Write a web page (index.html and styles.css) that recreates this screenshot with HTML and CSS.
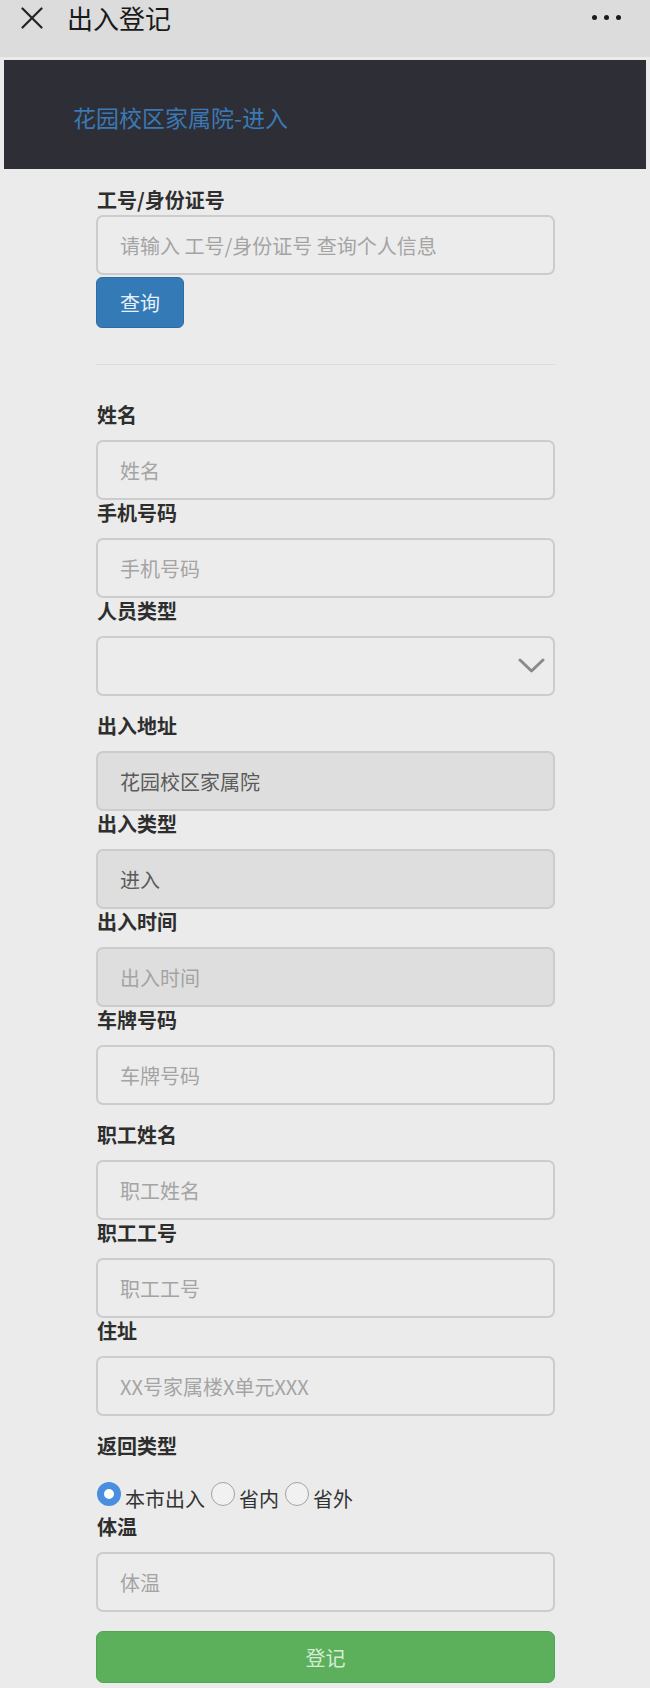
FILE: index.html
```html
<!DOCTYPE html>
<html lang="zh-CN">
<head>
<meta charset="utf-8">
<title>出入登记</title>
<link rel="stylesheet" href="styles.css">
</head>
<body>
<header class="topbar">
  <svg class="close-icon" width="22" height="22" viewBox="0 0 22 22"><path d="M1.5 1.5 L20.5 20.5 M20.5 1.5 L1.5 20.5" stroke="#222" stroke-width="2.2" fill="none" stroke-linecap="round"/></svg>
  <h1 class="topbar-title">出入登记</h1>
  <div class="more"><span class="dot"></span><span class="dot"></span><span class="dot"></span></div>
</header>
<nav class="banner"><a class="brand">花园校区家属院-进入</a></nav>
<form class="form">
  <label class="lbl lbl-first">工号/身份证号</label>
  <input class="ctl" type="text" placeholder="请输入 工号/身份证号 查询个人信息">
  <button type="button" class="btn-query">查询</button>
  <hr class="divider">

  <label class="lbl">姓名</label>
  <input class="ctl" type="text" placeholder="姓名">
  <label class="lbl">手机号码</label>
  <input class="ctl" type="text" placeholder="手机号码">
  <label class="lbl">人员类型</label>
  <div class="select-wrap">
    <select class="ctl sel"><option></option></select>
    <svg class="chev" width="27" height="16" viewBox="0 0 27 16"><path d="M2 2 L13.5 13 L25 2" stroke="#8a8a8a" stroke-width="3" fill="none" stroke-linecap="round" stroke-linejoin="round"/></svg>
  </div>

  <label class="lbl group">出入地址</label>
  <input class="ctl ro" type="text" value="花园校区家属院" readonly>
  <label class="lbl">出入类型</label>
  <input class="ctl ro" type="text" value="进入" readonly>
  <label class="lbl">出入时间</label>
  <input class="ctl ro" type="text" placeholder="出入时间" readonly>
  <label class="lbl">车牌号码</label>
  <input class="ctl" type="text" placeholder="车牌号码">

  <label class="lbl group">职工姓名</label>
  <input class="ctl" type="text" placeholder="职工姓名">
  <label class="lbl">职工工号</label>
  <input class="ctl" type="text" placeholder="职工工号">
  <label class="lbl">住址</label>
  <input class="ctl" type="text" placeholder="XX号家属楼X单元XXX">

  <label class="lbl group">返回类型</label>
  <div class="radios">
    <input class="radio" type="radio" name="rt" checked><span class="rtext">本市出入</span>
    <input class="radio" type="radio" name="rt"><span class="rtext">省内</span>
    <input class="radio" type="radio" name="rt"><span class="rtext">省外</span>
  </div>
  <label class="lbl lbl-temp">体温</label>
  <input class="ctl" type="text" placeholder="体温">
  <button type="button" class="btn-submit">登记</button>
</form>
</body>
</html>
```

FILE: styles.css
```css
* { box-sizing: border-box; }
html, body { margin: 0; padding: 0; }
body {
  background: #ebebeb;
  font-family: "Noto Sans CJK SC", "Noto Sans", sans-serif;
  color: #333;
  width: 650px;
  min-height: 1688px;
}
.topbar {
  height: 57px;
  background: #dcdcdc;
  display: flex;
  align-items: flex-start;
  padding: 0 29px 0 21px;
}
.close-icon { margin-top: 7px; flex: none; }
.topbar-title {
  margin: 0 0 0 24px;
  font-size: 26px;
  line-height: 36px;
  font-weight: 400;
  color: #1a1a1a;
  flex: 1;
}
.more {
  display: flex;
  gap: 7px;
  margin-top: 15px;
}
.dot {
  width: 5px; height: 5px;
  border-radius: 50%;
  background: #1a1a1a;
}
.banner {
  margin: 3px 4px 0 4px;
  height: 109px;
  background: #2e2e36;
  display: flex;
  align-items: center;
  padding-left: 69px;
}
.brand {
  color: #3b79b4;
  font-size: 23px;
  line-height: 30px;
  margin-top: 5px;
}
.form {
  margin: 0 95px 0 96px;
  padding-top: 18px;
  display: flex;
  flex-direction: column;
  align-items: stretch;
}
.lbl {
  display: block;
  font-size: 20px;
  line-height: 26px;
  font-weight: 700;
  color: #2e2e2e;
  margin: 0 0 12px 1px;
}
.lbl-first { margin-bottom: 2px; }
.lbl.group { margin-top: 17px; }
.ctl {
  display: block;
  width: 100%;
  height: 60px;
  border: 2px solid #cccccc;
  border-radius: 7px;
  background: #ececec;
  padding: 0 22px;
  font-family: inherit;
  font-size: 20px;
  color: #5a5a5a;
  outline: none;
  margin: 0;
}
.ctl::placeholder { color: #a4a4a4; }
.ctl.ro { background: #dedede; }
.select-wrap { position: relative; }
.sel { appearance: none; -webkit-appearance: none; }
.chev {
  position: absolute;
  right: 10px;
  top: 22px;
  pointer-events: none;
}
.btn-query {
  align-self: flex-start;
  margin-top: 2px;
  height: 51px;
  padding: 0 23px;
  background: #337ab7;
  border: 1px solid #2e6da4;
  border-radius: 6px;
  color: #e8f0f7;
  font-family: inherit;
  font-size: 20px;
}
.divider {
  border: 0;
  height: 1px;
  background: #dcdcdc;
  margin: 36px 0 37px 0;
}
.radios {
  display: flex;
  align-items: flex-start;
  height: 28px;
  margin-top: 14px;
  margin-left: 1px;
}
.radio {
  appearance: none;
  -webkit-appearance: none;
  width: 24px;
  height: 24px;
  border-radius: 50%;
  border: 1px solid #a2a2a2;
  background: #f1f1f1;
  margin: -3px 4px 0 0;
  flex: none;
}
.radio:checked {
  border: 7px solid #4a8fdf;
  background: #ffffff;
}
.rtext {
  font-size: 20px;
  line-height: 28px;
  color: #333;
  margin-right: 6px;
}
.lbl-temp { margin-top: 1px; }
.btn-submit {
  margin-top: 19px;
  height: 52px;
  width: 100%;
  background: #5cb05c;
  border: 1px solid #53a553;
  border-radius: 7px;
  color: #d6ecd6;
  font-family: inherit;
  font-size: 20px;
}
```
